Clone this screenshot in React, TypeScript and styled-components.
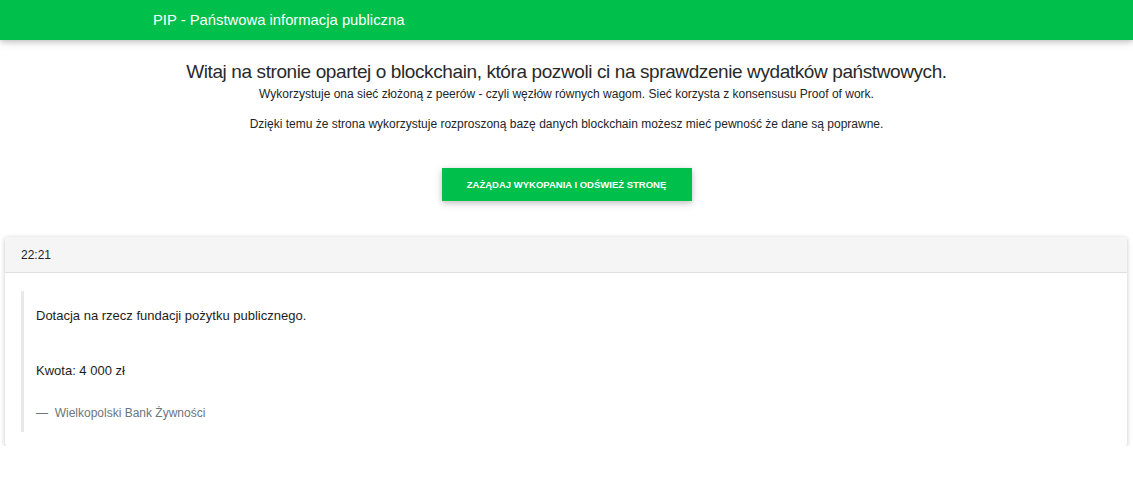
import React from "react";
import styled, { createGlobalStyle } from "styled-components";

const Global = createGlobalStyle`
  html, body { margin: 0; padding: 0; background: #fff; }
  body { font-family: "Liberation Sans", Arial, sans-serif; color: #212529; }
  * { box-sizing: border-box; }
`;

const Navbar = styled.nav`
  height: 40px;
  background: #00c04b;
  display: flex;
  align-items: center;
  padding-left: 153px;
  box-shadow: 0 2px 5px 0 rgba(0,0,0,0.16), 0 2px 10px 0 rgba(0,0,0,0.12);
  position: relative;
`;

const Brand = styled.span`
  color: #fff;
  font-size: 14.8px;
`;

const Intro = styled.section`
  display: flex;
  flex-direction: column;
  align-items: center;
  text-align: center;
  padding-top: 19px;
`;

const Title = styled.h1`
  margin: 0;
  font-size: 19px;
  font-weight: 400;
  letter-spacing: -0.4px;
  line-height: 26px;
  color: #2a2a2a;
`;

const Lead = styled.p<{ $top: number }>`
  margin: ${(p) => p.$top}px 0 0;
  font-size: 12px;
  line-height: 16px;
  color: #212529;
`;

const ActionButton = styled.button`
  margin-top: 36px;
  width: 250px;
  height: 33px;
  border: none;
  background: #00c04b;
  color: #fff;
  font-family: "Liberation Sans", Arial, sans-serif;
  font-size: 9.5px;
  font-weight: 700;
  text-transform: uppercase;
  box-shadow: 0 2px 5px 0 rgba(0,0,0,0.16), 0 2px 10px 0 rgba(0,0,0,0.12);
  cursor: pointer;
`;

const Card = styled.article`
  margin: 36px 6px 0 5px;
  border-radius: 3px;
  background: #fff;
  box-shadow: 0 1px 4px 0 rgba(0,0,0,0.16), 0 1px 6px 0 rgba(0,0,0,0.08);
  overflow: hidden;
`;

const CardHeader = styled.header`
  height: 36px;
  background: #f5f5f5;
  border-bottom: 1px solid #dfdfdf;
  display: flex;
  align-items: center;
  padding-left: 16px;
  font-size: 12px;
  color: #212529;
`;

const CardBody = styled.div`
  padding: 18px 16px 14px 16px;
`;

const Quote = styled.blockquote`
  margin: 0;
  border-left: 3px solid #e8e8e8;
  padding: 16px 0 11px 12px;
  display: flex;
  flex-direction: column;
`;

const QuoteText = styled.p<{ $top: number }>`
  margin: ${(p) => p.$top}px 0 0;
  font-size: 13px;
  line-height: 18px;
  color: #1d1d1d;
`;

const QuoteFooter = styled.footer`
  margin-top: 25px;
  font-size: 12px;
  line-height: 16px;
  color: #6c757d;
`;

export default function App() {
  return (
    <>
      <Global />
      <Navbar>
        <Brand>PIP - Państwowa informacja publiczna</Brand>
      </Navbar>
      <Intro>
        <Title>Witaj na stronie opartej o blockchain, która pozwoli ci na sprawdzenie wydatków państwowych.</Title>
        <Lead $top={1}>Wykorzystuje ona sieć złożoną z peerów - czyli węzłów równych wagom. Sieć korzysta z konsensusu Proof of work.</Lead>
        <Lead $top={14}>Dzięki temu że strona wykorzystuje rozproszoną bazę danych blockchain możesz mieć pewność że dane są poprawne.</Lead>
        <ActionButton>Zażądaj wykopania i odśwież stronę</ActionButton>
      </Intro>
      <Card>
        <CardHeader>22:21</CardHeader>
        <CardBody>
          <Quote>
            <QuoteText $top={0}>Dotacja na rzecz fundacji pożytku publicznego.</QuoteText>
            <QuoteText $top={37}>Kwota: 4 000 zł</QuoteText>
            <QuoteFooter>— &nbsp;Wielkopolski Bank Żywności</QuoteFooter>
          </Quote>
        </CardBody>
      </Card>
    </>
  );
}
